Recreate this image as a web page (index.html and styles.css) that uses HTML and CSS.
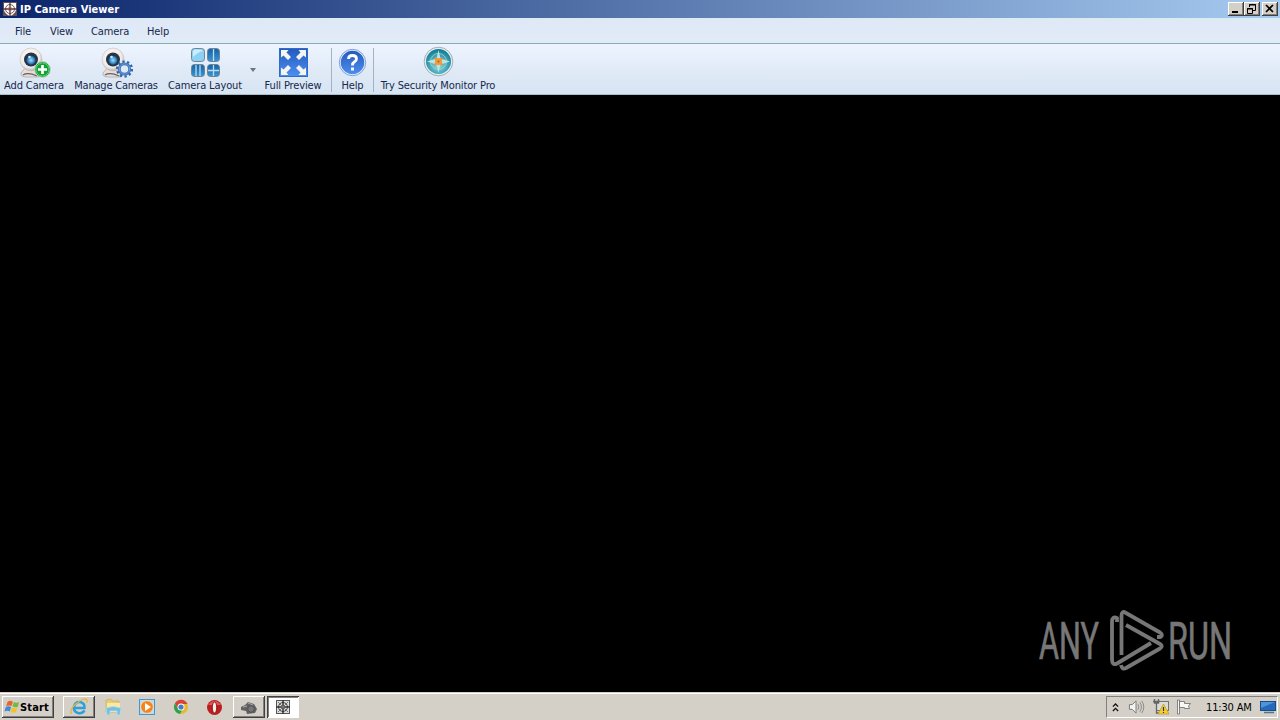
FILE: index.html
```html
<!DOCTYPE html>
<html lang="en">
<head>
    <meta charset="UTF-8">
    <meta name="viewport" content="width=device-width, initial-scale=1.0">
    <title>IP Camera Viewer</title>
    <link rel="stylesheet" href="styles.css">
</head>
<body>
    <svg width="0" height="0" class="defs">
        <defs>
            <linearGradient id="blue" x1="0" y1="0" x2="0" y2="1">
                <stop offset="0" stop-color="#2459bd"/>
                <stop offset="1" stop-color="#4d8ff0"/>
            </linearGradient>
            <linearGradient id="tile" x1="0" y1="0" x2="0" y2="1">
                <stop offset="0" stop-color="#1660a8"/>
                <stop offset="1" stop-color="#3c96d2"/>
            </linearGradient>
            <radialGradient id="lens" cx=".5" cy=".55" r=".5">
                <stop offset="0" stop-color="#a5dcfa"/>
                <stop offset=".45" stop-color="#3e8cc8"/>
                <stop offset=".7" stop-color="#173654"/>
                <stop offset="1" stop-color="#30343c"/>
            </radialGradient>
            <radialGradient id="shell" cx=".45" cy=".4" r=".6">
                <stop offset="0" stop-color="#ffffff"/>
                <stop offset=".75" stop-color="#efe9e7"/>
                <stop offset="1" stop-color="#b9b0ae"/>
            </radialGradient>
            <radialGradient id="teal" cx=".5" cy=".65" r=".6">
                <stop offset="0" stop-color="#8bdee4"/>
                <stop offset="1" stop-color="#138099"/>
            </radialGradient>
            <symbol id="webcam" viewBox="0 0 32 32">
                <path d="M7 20L2 26Q1 30 8 30H20L18 22Z" fill="#e6dedd" stroke="#aaa09e" stroke-width=".7"/>
                <path d="M4 28Q9 25 18 29" fill="none" stroke="#665d5d" stroke-width="1.3"/>
                <ellipse cx="12" cy="12.500" rx="11" ry="11.500" fill="url(#shell)" stroke="#c9c0be" stroke-width=".6"/>
                <circle cx="12" cy="12.500" r="7" fill="url(#lens)"/>
                <circle cx="10.500" cy="10" r="1.300" fill="#cdeafa"/>
            </symbol>
        </defs>
    </svg>

    <div class="window">
        <div class="titlebar">
            <svg class="app-icon" viewBox="0 0 14 14">
                <rect width="14" height="14" fill="#655052"/>
                <path d="M1 1H13V8Q12 12 7 14Q2 12 1 8Z" fill="#fff"/>
                <circle cx="7" cy="7" r="4.500" fill="none" stroke="#7b5558"/>
                <path d="M7 0V14M0 7H14" stroke="#5d3438" stroke-width="1.300"/>
                <circle cx="7" cy="7" r="1.800" fill="none" stroke="#905e60" stroke-width=".8"/>
            </svg>
            <span class="title">IP Camera Viewer</span>
            <div class="controls">
                <span class="control"><svg viewBox="0 0 16 14"><path d="M4 10H10" stroke="#000" stroke-width="2"/></svg></span>
                <span class="control"><svg viewBox="0 0 16 14"><path d="M5.500 5V2.500H11.500V8.500H9M5 3H12M3.500 6.500H8.500V11.500H3.500ZM3 7H9" fill="none" stroke="#000"/></svg></span>
                <span class="control close"><svg viewBox="0 0 16 14"><path d="M4 3L11 10M11 3L4 10" stroke="#000" stroke-width="1.700"/></svg></span>
            </div>
        </div>

        <div class="menubar">
            <span class="menu-file">File</span>
            <span class="menu-view">View</span>
            <span class="menu-camera">Camera</span>
            <span class="menu-help">Help</span>
        </div>

        <div class="toolbar">
            <div class="tool tool-add">
                <svg viewBox="0 0 32 32">
                    <use href="#webcam" width="32" height="32"/>
                    <circle cx="23.500" cy="22.500" r="7.900" fill="#12a233" stroke="#c9d8d2" stroke-width="1"/>
                    <circle cx="23.500" cy="22.500" r="6.500" fill="none" stroke="#70d481" stroke-width=".8"/>
                    <path d="M23.500 18V27M19 22.500H28" stroke="#fff" stroke-width="2.700"/>
                </svg>
                <span>Add Camera</span>
            </div>
            <div class="tool tool-manage">
                <svg viewBox="0 0 32 32">
                    <use href="#webcam" width="32" height="32"/>
                    <circle cx="23.500" cy="22" r="7.400" fill="none" stroke="#2d65ac" stroke-width="2.400" stroke-dasharray="2.325 2.325"/>
                    <circle cx="23.500" cy="22" r="5.200" fill="#dce9f7" stroke="#386fb5" stroke-width="2.800"/>
                    <circle cx="23.500" cy="22" r="5.200" fill="none" stroke="#7fa9dc" stroke-width=".8"/>
                </svg>
                <span>Manage Cameras</span>
            </div>
            <div class="tool tool-layout">
                <svg viewBox="0 0 32 32">
                    <g fill="url(#tile)" stroke="#6e8594">
                        <rect x="2.500" y="1.500" width="13" height="13" rx="3" fill="#8cd0f4"/>
                        <rect x="18.500" y="1.500" width="12" height="13" rx="3"/>
                        <rect x="2.500" y="17.500" width="13" height="12" rx="3"/>
                        <rect x="18.500" y="17.500" width="12" height="12" rx="3"/>
                    </g>
                    <path d="M4 10Q9 5 14 4Q13 2.500 10 2.500H6Q4 2.500 4 5Z" fill="#c9edff"/>
                    <path d="M24.500 2V14M7 18V29M11 18V29M24.500 18V29M19 23.500H30" stroke="#b8def2" stroke-width="1.300"/>
                </svg>
                <span>Camera Layout</span>
            </div>
            <div class="drop"></div>
            <div class="tool tool-full">
                <svg viewBox="0 0 32 32">
                    <rect x="2.500" y="1.500" width="28" height="28" fill="url(#blue)" stroke="#2f6ccc"/>
                    <g fill="#f5f5ef">
                        <path id="arrow" d="M4 3H11.500L9.500 5.500L14 10L11 13L6.500 8.500L4 10.500Z"/>
                        <use href="#arrow" transform="translate(33 0) scale(-1 1)"/>
                        <use href="#arrow" transform="translate(0 31) scale(1 -1)"/>
                        <use href="#arrow" transform="translate(33 31) scale(-1 -1)"/>
                    </g>
                </svg>
                <span>Full Preview</span>
            </div>
            <div class="separator"></div>
            <div class="tool tool-help">
                <svg viewBox="0 0 32 32">
                    <circle cx="15.500" cy="15.500" r="12.500" fill="url(#blue)" stroke="#e9f0fc" stroke-width="1.500"/>
                    <circle cx="15.500" cy="15.500" r="13.200" fill="none" stroke="#527dca" stroke-width=".7"/>
                    <path d="M11.500 12Q11.500 8.500 15.500 8.500Q19.500 8.500 19.500 11.800Q19.500 13.500 17.500 14.800Q15.500 16 15.500 18.500" fill="none" stroke="#fff" stroke-width="2.800"/>
                    <rect x="14" y="20.500" width="3" height="3" fill="#fff"/>
                </svg>
                <span>Help</span>
            </div>
            <div class="separator"></div>
            <div class="tool tool-pro">
                <svg viewBox="0 0 32 32">
                    <circle cx="16.500" cy="15.500" r="14.300" fill="#e6edef" stroke="#8f9da3" stroke-width=".8"/>
                    <circle cx="16.500" cy="15.500" r="12.500" fill="url(#teal)"/>
                    <circle cx="16.500" cy="15.500" r="8" fill="none" stroke="#a1d8d9" stroke-width=".8"/>
                    <path d="M16.500 4L18.500 12.500L28 15.500L18.500 18.500L16.500 27L14.500 18.500L5 15.500L14.500 12.500Z" fill="#bde2df"/>
                    <path d="M12.500 12L20.500 19M20.500 12L12.500 19" stroke="#ed8d2d" stroke-width="2"/>
                    <circle cx="16.500" cy="15.500" r="3.500" fill="#ee9a42"/>
                    <circle cx="16.500" cy="15.500" r="1" fill="#bc5c1b"/>
                </svg>
                <span>Try Security Monitor Pro</span>
            </div>
        </div>

        <div class="preview">
            <svg class="watermark" viewBox="0 0 200 70">
                <text x="3" y="54" textLength="60" lengthAdjust="spacingAndGlyphs">ANY</text>
                <text x="132" y="54" textLength="64" lengthAdjust="spacingAndGlyphs">RUN</text>
                <g fill="none" stroke="#777" stroke-width="3.800" stroke-linejoin="round">
                    <path d="M85.500 50V11Q85.500 5 90 8L124 27.500Q127.500 30 124.500 32L121 32"/>
                    <path d="M81 17V13Q76 11 76 17V54Q76 61 81 58.500L115 38"/>
                    <path d="M90 20L124 39Q127.500 41 124 43.500L90 63Q86 65 85 60"/>
                </g>
            </svg>
        </div>
    </div>

    <div class="taskbar">
        <div class="start">
            <svg viewBox="0 0 18 16">
                <path d="M4 2Q7 0 10 2L8.500 7Q6 5.500 2.500 7Z" fill="#e8642f"/>
                <path d="M11 2.500Q14 4 17 2.500L15.500 8Q12 9 9.500 7.500Z" fill="#79b83f"/>
                <path d="M2 8Q5 6.500 8 8L6.500 13Q4 11.500 .5 13Z" fill="#3c8bd6"/>
                <path d="M9 8.500Q12 10 15 9L13.500 14Q10 15 7.500 13.500Z" fill="#f2c12e"/>
            </svg>
            <span>Start</span>
        </div>
        <div class="task raised task-ie">
            <svg viewBox="0 0 20 20">
                <path d="M15.500 13.500Q13 17 9 16Q4 14.500 5 9.500Q6.500 4.500 11 5Q16 6 15.500 11H6" fill="none" stroke="#2aa0df" stroke-width="2.600"/>
                <path d="M2.500 17Q0 12 8 6Q16 0 18 3Q18.500 4 17.500 6" fill="none" stroke="#e7b53c" stroke-width="1.300"/>
            </svg>
        </div>
        <div class="task task-folder">
            <svg viewBox="0 0 20 20">
                <path d="M3 3L8 2L9 4H16V15H3Z" fill="#e9cb70" stroke="#c6a957" stroke-width=".6"/>
                <path d="M4 6H17V15H4Z" fill="#f9e9a7"/>
                <path d="M3 11Q10 8 18 11L17 18H14V14H7V18H4Z" fill="#77bfdc" stroke="#b9dde7" stroke-width=".8"/>
            </svg>
        </div>
        <div class="task task-player">
            <svg viewBox="0 0 20 20">
                <rect x="2.500" y="2.500" width="15" height="15" fill="#b7ddf3" stroke="#4596d0"/>
                <circle cx="10" cy="10" r="6.300" fill="#f48319" stroke="#fff1df" stroke-width=".6"/>
                <path d="M8 6L14 10L8 14Z" fill="#fff"/>
            </svg>
        </div>
        <div class="task task-chrome">
            <svg viewBox="0 0 20 20">
                <circle cx="10" cy="10" r="7" fill="#e9b92d"/>
                <path d="M3.900 6.500A7 7 0 0 1 16.500 7H10L7.200 11.600Z" fill="#da4334"/>
                <path d="M3.900 6.500L7.200 11.600L11 13L9 17A7 7 0 0 1 3.900 6.500Z" fill="#2ba253"/>
                <circle cx="10" cy="10" r="3.500" fill="#fff"/>
                <circle cx="10" cy="10" r="2.600" fill="#427fc2"/>
            </svg>
        </div>
        <div class="task task-opera">
            <svg viewBox="0 0 20 20">
                <circle cx="9.500" cy="10.500" r="7.500" fill="#bc1e20"/>
                <path d="M3 8Q9.500 0 16 8Z" fill="#dc5a55"/>
                <ellipse cx="9.500" cy="10.500" rx="2.200" ry="5.500" fill="#f8eeea" stroke="#8c1118"/>
            </svg>
        </div>
        <div class="task raised task-camera">
            <svg viewBox="0 0 20 20">
                <path d="M2 10L6 8L9 5L15 7L18 12L16 16L8 17L7 14L2 13Z" fill="#626262"/>
                <circle cx="12" cy="12" r="3.300" fill="#777" stroke="#505050"/>
                <path d="M4 10L8 9M9 6L14 8" stroke="#aaa"/>
            </svg>
        </div>
        <div class="task pressed task-viewer">
            <svg viewBox="0 0 20 20">
                <rect x="3" y="3" width="14" height="14" fill="#555"/>
                <path d="M4 4H16V16H4Z" fill="#ddd"/>
                <circle cx="10" cy="10" r="4.500" fill="none" stroke="#444"/>
                <path d="M10 3V17M3 10H17" stroke="#333" stroke-width="1.500"/>
                <path d="M5 5L15 15M15 5L5 15" stroke="#777"/>
            </svg>
        </div>

        <div class="tray">
            <svg class="tray-more" viewBox="0 0 8 12"><path d="M1 5L4 2L7 5M1 10L4 7L7 10" fill="none" stroke="#111" stroke-width="1.500"/></svg>
            <svg class="tray-sound" viewBox="0 0 18 16">
                <path d="M1.500 5.500H4.500L8.500 1.500V14.500L4.500 10.500H1.500Z" fill="#f3f3f0" stroke="#777"/>
                <path d="M10.500 5Q12.500 8 10.500 11M12.500 3Q16 8 12.500 13M14.500 1.500Q19 8 14.500 14.500" fill="none" stroke="#888"/>
            </svg>
            <svg class="tray-network" viewBox="0 0 18 18">
                <rect x="4.500" y="3.500" width="12" height="9" fill="#dcdcd7" stroke="#74746f"/>
                <path d="M2.500 1V5H6.500V1M1 3.500H8M4.500 5V15H8" fill="none" stroke="#666" stroke-width="1.300"/>
                <path d="M11.500 6L17 16H6Z" fill="#f5ce32" stroke="#ba962d" stroke-width=".7"/>
                <path d="M11.500 9V13M11.500 14V15" stroke="#333" stroke-width="1.200"/>
            </svg>
            <svg class="tray-flag" viewBox="0 0 16 16">
                <path d="M1.500 1V15H3.500V1ZM3.500 2.500H8.500V4.500H14.500L12.500 7L13.500 9.500H8.500V8.500H3.500Z" fill="#f7f7f3" stroke="#777" stroke-width=".9"/>
            </svg>
            <span class="clock">11:30 AM</span>
            <svg class="tray-desktop" viewBox="0 0 16 14">
                <rect x=".5" y="1.500" width="15" height="9" fill="#2369bc" stroke="#1b4c86"/>
                <path d="M1 2H15L1 8Z" fill="#4e94dc"/>
                <path d="M4 12.500H14" stroke="#58708d" stroke-width="1.500"/>
            </svg>
        </div>
    </div>
</body>
</html>
```
FILE: styles.css
```css
* {
    box-sizing: border-box;
}
body {
    margin: 0;
    height: 720px;
    display: flex;
    flex-direction: column;
    overflow: hidden;
    background: #000;
    color: #16284c;
    font-family: "DejaVu Sans Condensed", "DejaVu Sans", sans-serif;
    font-size: 11px;
    white-space: nowrap;
}
svg {
    display: block;
    flex: none;
}
.defs {
    position: absolute;
}
.window {
    flex: 1;
    display: flex;
    flex-direction: column;
}
.titlebar {
    height: 18px;
    display: flex;
    align-items: center;
    padding: 0 2px 0 3px;
    background: linear-gradient(to right, #0a246a, #a6caf0);
    color: #fff;
}
.app-icon {
    width: 14px;
    height: 14px;
}
.title {
    margin-left: 3px;
    font-weight: bold;
    letter-spacing: 0.03px;
}
.controls {
    display: flex;
    margin-left: auto;
}
.control {
    width: 16px;
    height: 14px;
    background: #d4d0c8;
    box-shadow: inset -1px -1px #404040, inset 1px 1px #fff, inset -2px -2px #808080;
}
.control svg {
    width: 16px;
    height: 14px;
}
.close {
    margin-left: 2px;
}
.menubar {
    height: 26px;
    display: flex;
    align-items: center;
    padding: 2px 0 0 15px;
    background: linear-gradient(#dceaf2, #e0e9f8 30%, #e0ecf6);
    border-bottom: 1px solid #8fa8b8;
    letter-spacing: -0.1px;
}
.menu-file {
    width: 35px;
}
.menu-view {
    width: 41px;
}
.menu-camera {
    width: 56px;
}
.toolbar {
    height: 51px;
    display: flex;
    background: linear-gradient(#edf6ff, #e2ebf8 45%, #d7e4f2);
    border-bottom: 1px solid #a9bdcb;
    letter-spacing: -0.13px;
}
.tool {
    display: flex;
    flex-direction: column;
    align-items: center;
    padding-top: 3px;
}
.tool svg {
    width: 32px;
    height: 32px;
}
.tool span {
    line-height: 13px;
}
.tool-add {
    width: 68px;
}
.tool-add svg, .tool-manage svg {
    margin-left: 2px;
}
.tool-manage {
    width: 96px;
    letter-spacing: -0.2px;
}
.tool-layout {
    width: 82px;
}
.drop {
    width: 14px;
    display: flex;
    justify-content: center;
    padding-top: 24px;
}
.drop::before {
    content: "";
    height: 0;
    border: 3px solid transparent;
    border-top: 4px solid #66758a;
    border-bottom: 0;
}
.tool-full {
    width: 66px;
    margin-right: 5px;
}
.separator {
    width: 1px;
    height: 44px;
    margin-top: 4px;
    background: #a3b3c3;
}
.tool-help {
    width: 41px;
}
.tool-pro {
    width: 128px;
}
.tool-pro svg {
    margin-top: -1px;
    margin-bottom: 1px;
}
.preview {
    flex: 1;
    display: flex;
    align-items: flex-end;
    justify-content: flex-end;
    padding: 0 44px 17px 0;
    background: #000;
}
.watermark {
    width: 200px;
    height: 70px;
    overflow: visible;
}
.watermark text {
    fill: #777;
    stroke: #777;
    stroke-width: 0.7px;
    font-family: "Roboto", sans-serif;
    font-size: 51px;
}
.taskbar {
    height: 28px;
    display: flex;
    align-items: flex-start;
    padding: 4px 2px 0;
    background: #d4d0c8;
    box-shadow: inset 0 1px #d4d0c8, inset 0 2px #fff;
    color: #000;
}
.start, .raised {
    box-shadow: inset -1px -1px #404040, inset 1px 1px #fff, inset -2px -2px #808080;
}
.start {
    width: 52px;
    height: 22px;
    display: flex;
    align-items: center;
    padding-left: 2px;
    margin-right: 9px;
    font-weight: bold;
    letter-spacing: 0.15px;
}
.start svg {
    width: 16px;
    height: 16px;
}
.task {
    width: 32px;
    height: 22px;
    margin-right: 2px;
    display: flex;
    align-items: center;
    justify-content: center;
}
.task svg {
    width: 20px;
    height: 20px;
}
.pressed {
    background: #fff;
    box-shadow: inset 1px 1px #404040, inset -1px -1px #fff, inset 2px 2px #808080;
}
.tray {
    width: 172px;
    height: 22px;
    margin-left: auto;
    display: flex;
    align-items: center;
    padding-left: 5px;
    border: 1px solid;
    border-color: #808080 #fff #fff #808080;
}
.tray-more {
    width: 7px;
    height: 11px;
}
.tray-sound {
    width: 17px;
    height: 16px;
    margin-left: 9px;
}
.tray-network {
    width: 18px;
    height: 18px;
    margin-left: 7px;
}
.tray-flag {
    width: 16px;
    height: 16px;
    margin-left: 6px;
}
.clock {
    width: 54px;
    margin-left: 14px;
    letter-spacing: -0.15px;
}
.tray-desktop {
    width: 16px;
    height: 14px;
}
```
